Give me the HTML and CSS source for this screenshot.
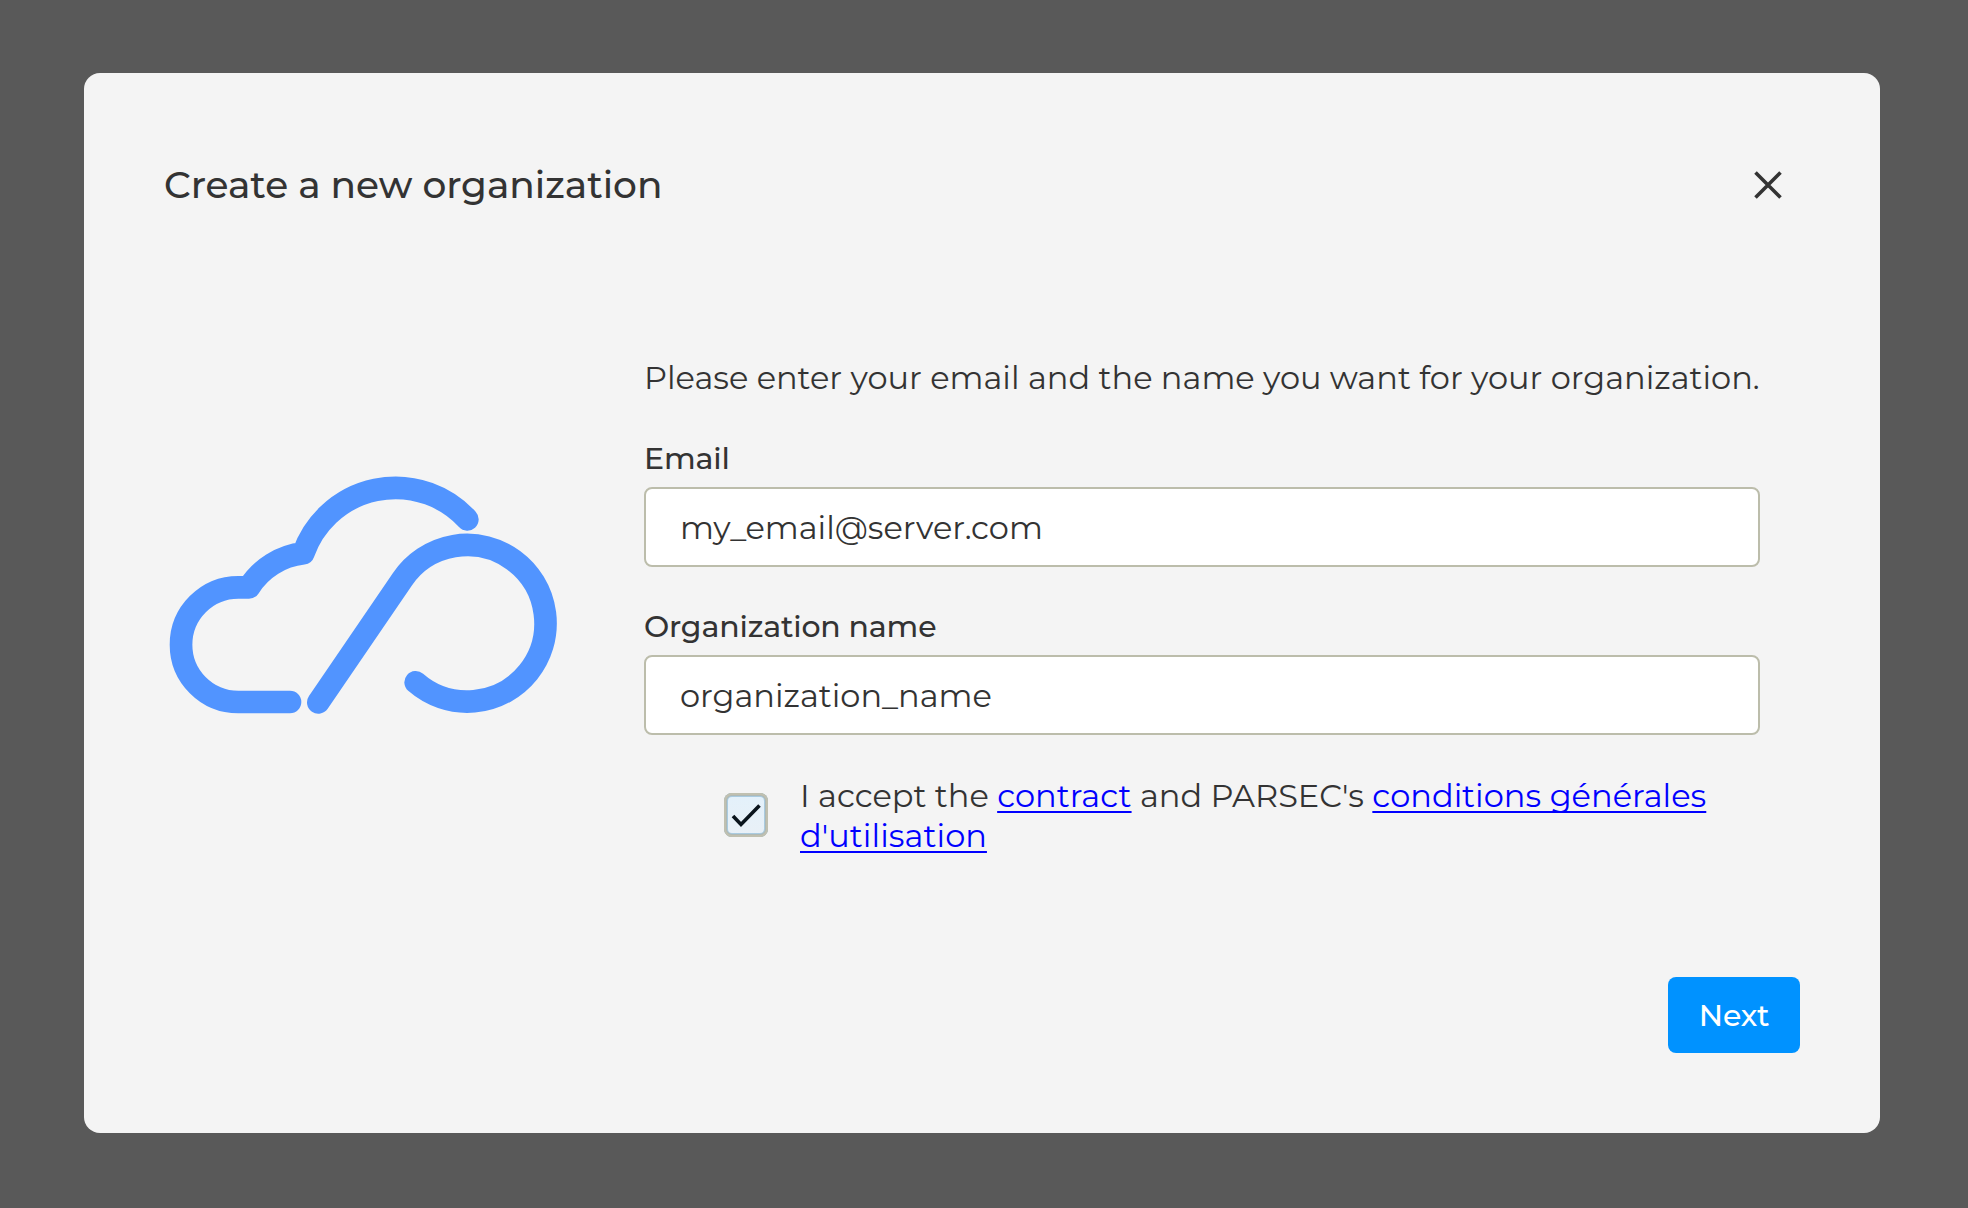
FILE: index.html
```html
<!DOCTYPE html>
<html lang="en">
<head>
<meta charset="utf-8">
<title>Create a new organization</title>
<link rel="stylesheet" href="styles.css">
</head>
<body>
<main class="modal">
  <header class="modal-header">
    <h1 class="title">Create a new organization</h1>
    <button class="close" type="button" aria-label="Close">
      <svg width="28" height="28" viewBox="0 0 28 28"><path d="M1.5 1.5L26.5 26.5M26.5 1.5L1.5 26.5" fill="none" stroke="#333" stroke-width="3.6"/></svg>
    </button>
  </header>
  <div class="content">
    <svg class="logo" viewBox="0 0 1260 810" aria-hidden="true">
      <g fill="none" stroke="#5194ff" stroke-width="68" stroke-linecap="round" stroke-linejoin="round">
        <path d="M420 726H265A172 172 0 0 1 265 382H297A222 222 0 0 1 460 280A293 293 0 0 1 952 178"/>
        <path d="M797 667A235 235 0 1 0 757 358L505 727"/>
      </g>
    </svg>
    <form class="form">
      <p class="intro">Please enter your email and the name you want for your organization.</p>
      <label class="label" for="email">Email</label>
      <input class="field" id="email" type="text" value="my_email@server.com">
      <label class="label" for="org">Organization name</label>
      <input class="field" id="org" type="text" value="organization_name">
      <div class="accept">
        <span class="checkbox" role="checkbox" aria-checked="true">
          <svg width="44" height="44" viewBox="0 0 44 44"><path d="M9 23L17 31.5L35.5 12.5" fill="none" stroke="#0a141c" stroke-width="3.6"/></svg>
        </span>
        <p class="terms">I accept the <a href="#">contract</a> and PARSEC's <a href="#">conditions générales d'utilisation</a></p>
      </div>
    </form>
  </div>
  <footer class="modal-footer">
    <button class="next" type="button">Next</button>
  </footer>
</main>
</body>
</html>
```
FILE: styles.css
```css
* {
  box-sizing: border-box;
}

body {
  margin: 0;
  padding: 73px 88px 75px 84px;
  height: 1208px;
  background: #595959;
  color: #333;
  font-family: Montserrat, Inter, sans-serif;
  font-size: 32px;
}

.modal {
  display: flex;
  flex-direction: column;
  height: 1060px;
  padding: 80px;
  border-radius: 16px;
  background: #f4f4f4;
}

.modal-header {
  display: flex;
  align-items: center;
  justify-content: space-between;
  height: 64px;
  padding-right: 18px;
}

.title {
  margin: 0;
  padding-bottom: 1px;
  font-size: 37.5px;
  font-weight: 500;
  letter-spacing: -0.03px;
}

.close {
  display: flex;
  padding: 0;
  border: 0;
  background: none;
}

.content {
  display: flex;
  align-items: flex-start;
  margin-top: 141px;
}

.logo {
  width: 420px;
  height: 270px;
  margin: 102px 74px 0 -14px;
}

.form {
  display: flex;
  flex-direction: column;
  width: 1116px;
}

.intro {
  margin: 0;
  line-height: 40px;
  white-space: nowrap;
}

.label {
  margin-top: 41px;
  margin-bottom: 8px;
  font-size: 30px;
  font-weight: 500;
  letter-spacing: -0.15px;
  line-height: 40px;
}

.field + .label {
  margin-top: 40px;
}

.field {
  height: 80px;
  padding: 0 34px;
  border: 2px solid #bcbdab;
  border-radius: 8px;
  background: #fff;
  color: #333;
  font: 32px Montserrat, Inter, sans-serif;
  outline: 0;
}

.accept {
  display: flex;
  align-items: center;
  gap: 32px;
  margin: 40px 0 0 80px;
}

.checkbox {
  flex: none;
  width: 44px;
  height: 44px;
  margin-bottom: 1px;
  border-radius: 8px;
  background: linear-gradient(#e3f1fb, #e9f0f6);
  box-shadow: inset 0 0 0 2px #c0c0b0, inset 0 0 0 3px #afb9b6, inset 0 0 0 4px #a9cbe0;
}

.checkbox svg {
  display: block;
}

.terms {
  margin: 0;
  padding-top: 1px;
  line-height: 40px;
}

.terms a {
  color: #00f;
  letter-spacing: 0.05px;
  text-decoration-thickness: 2px;
  text-underline-offset: 4px;
  text-decoration-skip-ink: none;
}

.modal-footer {
  display: flex;
  justify-content: flex-end;
  margin-top: auto;
}

.next {
  width: 132px;
  height: 76px;
  padding: 0;
  border: 0;
  border-radius: 8px;
  background: #0092ff;
  color: #fff;
  font: 500 30px Montserrat, Inter, sans-serif;
  letter-spacing: -0.15px;
}
```
